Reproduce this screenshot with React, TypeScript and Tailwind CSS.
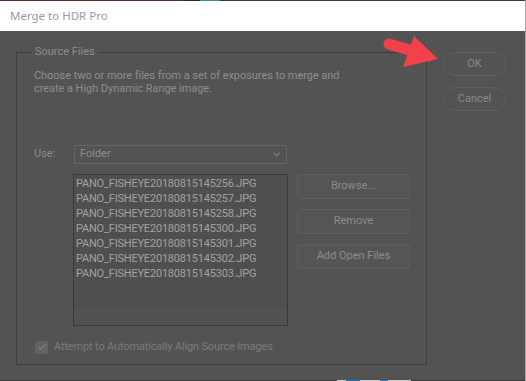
import { Check, ChevronDown } from "lucide-react"

const files = [
  "PANO_FISHEYE20180815145256.JPG",
  "PANO_FISHEYE20180815145257.JPG",
  "PANO_FISHEYE20180815145258.JPG",
  "PANO_FISHEYE20180815145300.JPG",
  "PANO_FISHEYE20180815145301.JPG",
  "PANO_FISHEYE20180815145302.JPG",
  "PANO_FISHEYE20180815145303.JPG",
]

function SideButton({ label }: { label: string }) {
  return (
    <button className="h-[25px] w-[113px] rounded-[2px] border border-[#5e5e5e] bg-[#555555] text-[11px] text-[#8c8c8c]">
      {label}
    </button>
  )
}

function PillButton({ label }: { label: string }) {
  return (
    <button className="h-[24px] w-[63px] rounded-full border border-[#5f5f5f] text-[11px] text-[#8a8a8a]">
      {label}
    </button>
  )
}

export default function App() {
  return (
    <div
      className="relative w-[526px] h-[381px] overflow-hidden bg-[#535353] border-r border-[#a9a9a9]"
      style={{ fontFamily: 'Roboto, "Liberation Sans", sans-serif' }}
    >
      {/* strip of whatever is behind the window */}
      <div className="flex h-[1px]">
        <div className="w-[185px] bg-[#5a2a2a]" />
        <div className="w-[15px] bg-[#2a2a2a]" />
        <div className="w-[20px] bg-[#2f9a5c]" />
        <div className="flex-1 bg-[#3a3a3a]" />
      </div>

      {/* Title bar */}
      <div
        className="h-[30px] bg-white flex items-center pl-[10px] text-[11.5px] text-[#9a9aa6]"
        style={{ fontFamily: '"Noto Sans", sans-serif' }}
      >
        Merge to HDR Pro
      </div>

      <div className="flex">
        {/* Source Files group */}
        <div className="relative ml-[16px] mt-[21px] w-[411px] h-[313px] border border-[#3e3e3e] pl-[17px]">
          <span className="absolute -top-[9px] left-[14px] bg-[#535353] px-[4px] text-[11px] leading-[16px] text-[#8e8e8e]">
            Source Files
          </span>

          <p className="pt-[16px] text-[11px] leading-[13px] tracking-[-0.05px] text-[#8e8e8e]">
            Choose two or more files from a set of exposures to merge and
            <br />
            create a High Dynamic Range image.
          </p>

          <div className="mt-[50px] flex items-center">
            <span className="w-[40px] text-[11px] text-[#8e8e8e]">Use:</span>
            <div className="flex h-[19px] w-[213px] items-center justify-between rounded-[2px] border border-[#666666] pl-[5px] pr-[4px] text-[11px] text-[#8e8e8e]">
              Folder
              <ChevronDown className="h-[11px] w-[11px] text-[#a0a0a0]" strokeWidth={2} />
            </div>
          </div>

          <div className="mt-[10px] flex items-start">
            <div className="ml-[39px] flex h-[152px] w-[215px] flex-col border border-[#3a3a3a] bg-[#4f4f4f]">
              <div className="flex-1 pt-[1px] pl-[2px]">
                {files.map((f) => (
                  <div key={f} className="h-[15px] text-[11px] leading-[15px] tracking-[-0.2px] text-[#a2a2a2]">
                    {f}
                  </div>
                ))}
              </div>
              <div className="h-[17px] bg-[#525252]" />
            </div>

            <div className="ml-[9px] flex flex-col gap-[10px]">
              <SideButton label="Browse..." />
              <SideButton label="Remove" />
              <SideButton label="Add Open Files" />
            </div>
          </div>

          <div className="mt-[13px] ml-[1px] flex items-center gap-[6px]">
            <div className="flex h-[13px] w-[13px] items-center justify-center rounded-[2px] bg-[#626262]">
              <Check className="h-[10px] w-[10px] text-[#7a7a7a]" strokeWidth={3} />
            </div>
            <span className="text-[11px] tracking-[-0.15px] text-[#7a7a7a]">
              Attempt to Automatically Align Source Images
            </span>
          </div>
        </div>

        {/* OK / Cancel */}
        <div className="ml-[16px] mt-[21px] flex flex-col gap-[11px]">
          <PillButton label="OK" />
          <PillButton label="Cancel" />
        </div>
      </div>

      {/* bottom strip */}
      <div className="absolute bottom-0 left-0 right-0 flex h-[1px]">
        <div className="w-[337px] bg-[#3a3a3a]" />
        <div className="w-[9px] bg-[#cfcfcf]" />
        <div className="w-[14px] bg-[#2d6fae]" />
        <div className="w-[20px] bg-[#cfcfcf]" />
        <div className="w-[8px] bg-[#2d6fae]" />
        <div className="w-[23px] bg-[#cfcfcf]" />
        <div className="flex-1 bg-[#3a3a3a]" />
      </div>

      {/* red annotation arrow */}
      <svg className="absolute left-0 top-0" width="526" height="381" viewBox="0 0 526 381">
        <line x1="389" y1="44" x2="416" y2="52" stroke="#f2414a" strokeWidth="11" strokeLinecap="round" />
        <polygon points="414,36 438,59 403,67" fill="#f2414a" />
      </svg>
    </div>
  )
}
